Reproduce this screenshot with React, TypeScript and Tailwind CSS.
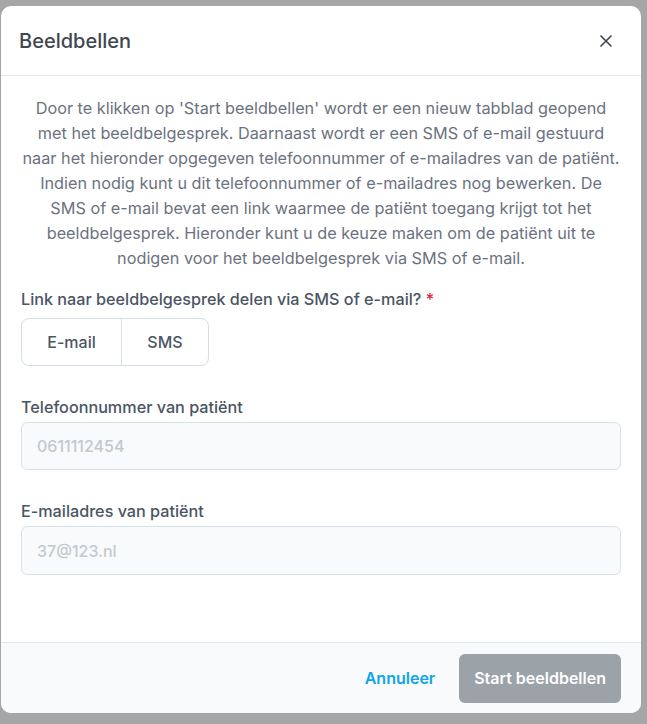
import React from "react";

export default function App() {
    return (
        <div className="min-h-screen bg-[#a6a6a7] pt-[6px] pl-px font-['Inter',sans-serif]">
            <div className="w-[640px] h-[707px] bg-white rounded-[10px] flex flex-col overflow-hidden">
                {/* Header */}
                <div className="h-[70px] px-5 flex items-center justify-between border-b border-[#e2e8f0] shrink-0">
                    <h2 className="text-[20px] font-medium text-[#3f4650] -ml-[2px]">Beeldbellen</h2>
                    <button className="text-[#3f4650] mr-[5px]" aria-label="Sluiten">
                        <svg width="20" height="20" viewBox="0 0 24 24" fill="none" stroke="currentColor" strokeWidth={2} strokeLinecap="round">
                            <path d="M6 6l12 12M18 6L6 18" />
                        </svg>
                    </button>
                </div>

                {/* Body */}
                <div className="flex-1 px-5 pt-5">
                    <p className="text-[16.25px] leading-[25px] text-[#6b7280] text-center">
                        Door te klikken op 'Start beeldbellen' wordt er een nieuw tabblad geopend met het beeldbelgesprek. Daarnaast wordt er een SMS of e-mail gestuurd naar het hieronder opgegeven telefoonnummer of e-mailadres van de patiënt. Indien nodig kunt u dit telefoonnummer of e-mailadres nog bewerken. De SMS of e-mail bevat een link waarmee de patiënt toegang krijgt tot het beeldbelgesprek. Hieronder kunt u de keuze maken om de patiënt uit te nodigen voor het beeldbelgesprek via SMS of e-mail.
                    </p>

                    <div className="mt-[18px]">
                        <label className="block text-[16.2px] leading-5 font-medium text-[#4b5563]">
                            Link naar beeldbelgesprek delen via SMS of e-mail? <span className="text-[#e11d48]">*</span>
                        </label>
                        <div className="mt-[9px] inline-flex h-12 rounded-lg border border-[#d3dee8] overflow-hidden">
                            <button className="w-[100px] text-[16px] font-medium text-[#4b5563] border-r border-[#d3dee8]">E-mail</button>
                            <button className="w-[86px] text-[16px] font-medium text-[#4b5563]">SMS</button>
                        </div>
                    </div>

                    <div className="mt-[31px]">
                        <label className="block text-[16.2px] leading-5 font-medium text-[#4b5563]">Telefoonnummer van patiënt</label>
                        <input
                            className="mt-[5px] w-full h-12 rounded-md border border-[#d6e2ec] bg-[#f8fafc] px-[15px] text-[16px] font-medium placeholder:text-[#c3c9cf] outline-none"
                            placeholder="0611112454"
                            disabled
                        />
                    </div>

                    <div className="mt-[31px]">
                        <label className="block text-[16.2px] leading-5 font-medium text-[#4b5563]">E-mailadres van patiënt</label>
                        <input
                            className="mt-[5px] w-full h-[49px] rounded-md border border-[#d6e2ec] bg-[#f8fafc] px-[15px] text-[16px] font-medium placeholder:text-[#c3c9cf] outline-none"
                            placeholder="37@123.nl"
                            disabled
                        />
                    </div>
                </div>

                {/* Footer */}
                <div className="h-[71px] shrink-0 border-t border-[#e2e8f0] bg-[#f8fafc] px-5 flex items-center justify-end gap-6">
                    <button className="text-[16px] font-semibold text-[#0ea5e9]">Annuleer</button>
                    <button className="h-[49px] px-[15px] rounded-md bg-[#9ca3a8] text-[16px] font-semibold text-white">
                        Start beeldbellen
                    </button>
                </div>
            </div>
        </div>
    );
}
